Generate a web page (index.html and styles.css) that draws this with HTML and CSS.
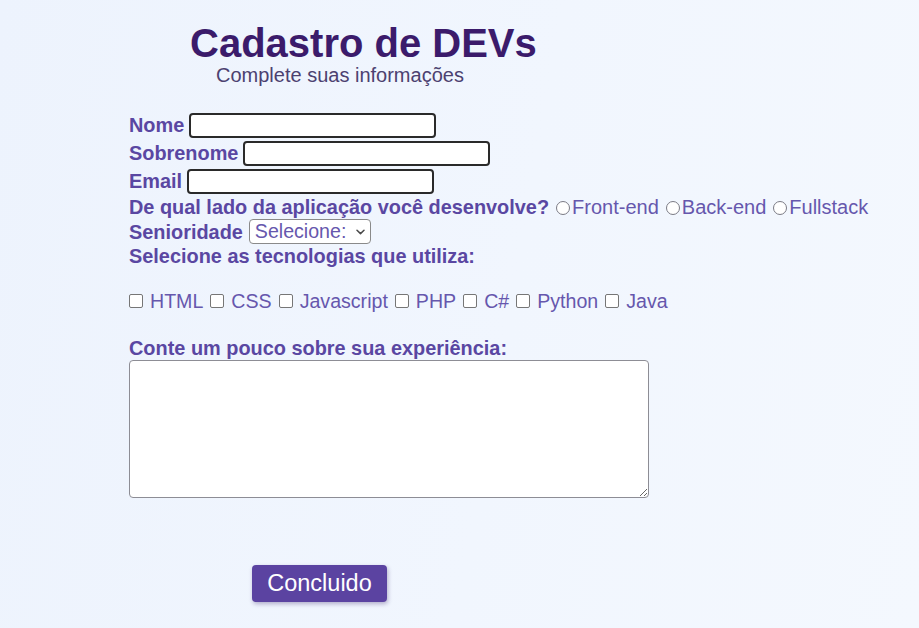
FILE: index.html
```html
<!DOCTYPE html>
<html lang="pt-BR">
<head>
<meta charset="utf-8">
<title>Cadastro de DEVs</title>
<link rel="stylesheet" href="styles.css">
</head>
<body>
<main class="page">
  <header class="header">
    <h1 class="title">Cadastro de DEVs</h1>
    <p class="subtitle">Complete suas informações</p>
  </header>
  <form class="form">
    <div class="row row-input">
      <label class="label" for="nome">Nome</label>
      <input class="text" id="nome" type="text">
    </div>
    <div class="row row-input">
      <label class="label" for="sobrenome">Sobrenome</label>
      <input class="text" id="sobrenome" type="text">
    </div>
    <div class="row row-input">
      <label class="label" for="email">Email</label>
      <input class="text" id="email" type="email">
    </div>
    <div class="row row-line">
      <span class="label">De qual lado da aplicação você desenvolve?</span>
      <label class="opt opt-radio"><input class="radio" type="radio" name="lado">Front-end</label>
      <label class="opt opt-radio"><input class="radio" type="radio" name="lado">Back-end</label>
      <label class="opt opt-radio"><input class="radio" type="radio" name="lado">Fullstack</label>
    </div>
    <div class="row row-select">
      <label class="label" for="sen">Senioridade</label>
      <span class="select-wrap">
        <select class="select" id="sen">
          <option>Selecione:</option>
          <option>Júnior</option>
          <option>Pleno</option>
          <option>Sênior</option>
        </select>
        <svg class="chev" width="9" height="6" viewBox="0 0 9 6"><path d="M1 1.2 L4.5 4.6 L8 1.2" fill="none" stroke="#4a4a4a" stroke-width="1.5" stroke-linecap="round" stroke-linejoin="round"/></svg>
      </span>
    </div>
    <div class="row row-line">
      <span class="label">Selecione as tecnologias que utiliza:</span>
    </div>
    <div class="row row-line row-checks">
      <label class="opt"><input class="check" type="checkbox">HTML</label>
      <label class="opt"><input class="check" type="checkbox">CSS</label>
      <label class="opt"><input class="check" type="checkbox">Javascript</label>
      <label class="opt"><input class="check" type="checkbox">PHP</label>
      <label class="opt"><input class="check" type="checkbox">C#</label>
      <label class="opt"><input class="check" type="checkbox">Python</label>
      <label class="opt"><input class="check" type="checkbox">Java</label>
    </div>
    <div class="row row-line row-exp">
      <label class="label" for="exp">Conte um pouco sobre sua experiência:</label>
    </div>
    <textarea class="area" id="exp"></textarea>
    <div class="actions">
      <button class="btn" type="button">Concluido</button>
    </div>
  </form>
</main>
</body>
</html>
```

FILE: styles.css
```css
* { box-sizing: border-box; }

html, body {
  margin: 0;
  padding: 0;
}

body {
  background: linear-gradient(100deg, #edf3fd 0%, #f1f6fe 55%, #f4f8fe 100%);
  font-family: "Liberation Sans", Arial, sans-serif;
  min-height: 628px;
}

.page {
  padding: 23px 0 0 129px;
}

.header {
  display: flex;
  flex-direction: column;
}

.title {
  margin: 0 0 0 61px;
  font-size: 40px;
  line-height: 40px;
  font-weight: bold;
  color: #3b1b6b;
}

.subtitle {
  margin: 2px 0 0 87px;
  font-size: 20px;
  line-height: 20px;
  color: #4c4170;
}

.form {
  display: flex;
  flex-direction: column;
  margin-top: 26px;
}

.row {
  display: flex;
  align-items: center;
  white-space: nowrap;
}

.row-input { height: 28px; }
.row-line { height: 24px; }
.row-select { height: 25px; }
.row-checks { margin-top: 21px; }
.row-exp { margin-top: 23px; }

.label {
  font-size: 19.9px;
  font-weight: bold;
  color: #5a47a2;
  line-height: 24px;
}

.text {
  margin-left: 5px;
  width: 247px;
  height: 25px;
  border: 2px solid #2a2a2a;
  border-radius: 4px;
  background: #fff;
  padding: 0 4px;
  font: inherit;
}

.opt {
  display: inline-flex;
  align-items: center;
  font-size: 19.6px;
  color: #6657ad;
  line-height: 24px;
  margin-right: 7px;
}

.opt-radio {
  margin-right: 0;
  font-size: 20px;
}

.radio {
  appearance: none;
  -webkit-appearance: none;
  width: 14px;
  height: 14px;
  margin: 1px 2px 0 7px;
  border: 1px solid #7b7b85;
  border-radius: 50%;
  background: #fff;
}

.check {
  appearance: none;
  -webkit-appearance: none;
  width: 14px;
  height: 14px;
  margin: 0 7px 0 0;
  border: 1px solid #767676;
  border-radius: 2px;
  background: #fff;
}

.select-wrap {
  position: relative;
  display: inline-flex;
  margin-left: 6px;
}

.select {
  appearance: none;
  -webkit-appearance: none;
  width: 122px;
  height: 25px;
  padding: 0 18px 0 5px;
  border: 1px solid #8a8a8a;
  border-radius: 4px;
  background: #fff;
  font-family: inherit;
  font-size: 19.6px;
  color: #6657ad;
  line-height: 23px;
}

.chev {
  position: absolute;
  right: 6px;
  top: 10px;
  pointer-events: none;
}

.area {
  width: 520px;
  height: 138px;
  border: 1px solid #8d8d95;
  border-radius: 4px;
  background: #fff;
  resize: both;
  font: inherit;
}

.actions {
  margin-top: 67px;
  padding-left: 123px;
}

.btn {
  width: 135px;
  height: 37px;
  border: none;
  border-radius: 4px;
  background: #5b43a1;
  color: #fff;
  font-family: inherit;
  font-size: 23.5px;
  box-shadow: 1px 2px 4px rgba(60, 40, 110, 0.35);
  padding: 0;
}
```
